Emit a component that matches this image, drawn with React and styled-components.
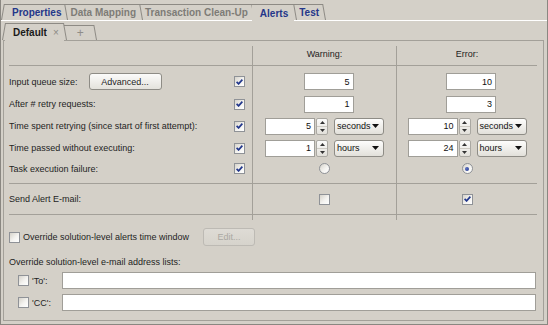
import React from 'react';
import styled, { createGlobalStyle, css } from 'styled-components';

const BG = '#d4d0c8';
const LINE = '#a3a099';
const EDGE = '#8d8a84';

const Global = createGlobalStyle`
  html, body { margin: 0; padding: 0; background: ${BG}; }
  body { font-family: "Liberation Sans", Arial, sans-serif; font-size: 9px; color: #1e1e1e; }
  * { box-sizing: border-box; }
`;

const Root = styled.div`
  width: 548px;
  height: 325px;
  background: ${BG};
  border: 1px solid #8a8781;
  border-top: none;
  display: flex;
  flex-direction: column;
`;

const TabStrip = styled.div`
  display: flex;
  align-items: flex-end;
  height: ${p => p.$h}px;
  padding-left: ${p => p.$pl}px;
  position: relative;
  z-index: 2;
  flex: none;
`;

const Tab = styled.div`
  position: relative;
  height: ${p => p.$h}px;
  margin-bottom: ${p => (p.$active ? -1 : 0)}px;
  display: flex;
  align-items: center;
  padding: 0 ${p => p.$pr}px 0 ${p => p.$pl}px;
  font-weight: bold;
  font-size: 10px;
  white-space: nowrap;
  color: ${p => p.$tone};
  background: ${p => (p.$active ? BG : 'transparent')};
  border-top: 1px solid ${EDGE};
  z-index: ${p => (p.$active ? 2 : 1)};
  &::after {
    content: '';
    position: absolute;
    top: -1px;
    bottom: ${p => (p.$active ? 1 : 0)}px;
    right: -3px;
    width: 1px;
    background: ${EDGE};
    transform: skewX(10deg);
    transform-origin: bottom;
  }
  ${p =>
    p.$first &&
    css`
      &::before {
        content: '';
        position: absolute;
        top: -1px;
        bottom: ${p.$active ? 1 : 0}px;
        left: -3px;
        width: 1px;
        background: ${EDGE};
        transform: skewX(-10deg);
        transform-origin: bottom;
      }
    `}
`;

const Close = styled.span`
  font-weight: normal;
  font-size: 10px;
  color: #8c8a85;
  margin-left: 6px;
`;

const Plus = styled.span`
  font-weight: normal;
  font-size: 12px;
  color: #8f8d88;
`;

const Frame = styled.div`
  flex: 1;
  border-top: 1px solid #ffffff;
  padding: 0 3px 3px 2px;
  display: flex;
  flex-direction: column;
`;

const Panel = styled.div`
  height: 281px;
  border: 1px solid ${LINE};
  padding: 5px 0 0 5px;
  display: flex;
  flex-direction: column;
  position: relative;
  z-index: 1;
`;

const Table = styled.div`
  display: grid;
  grid-template-columns: 243px 144px 141px;
  grid-template-rows: 20px 27px 22px 22px 22px 25px 31px 5px;
  width: 528px;
`;

const Row = styled.div`
  display: contents;
`;

const Cell = styled.div`
  display: flex;
  align-items: center;
  justify-content: ${p => (p.$col === 0 ? 'space-between' : 'center')};
  border-left: ${p => (p.$col > 0 ? `1px solid ${LINE}` : 'none')};
  border-bottom: ${p => (p.$line ? `1px solid ${LINE}` : 'none')};
  padding: ${p => p.$pt || 0}px ${p => (p.$col === 0 ? 7 : 0)}px ${p => p.$pb || 0}px 0;
`;

const LabelGroup = styled.div`
  display: flex;
  align-items: center;
  gap: 11px;
  white-space: nowrap;
`;

const Text = styled.span`
  white-space: nowrap;
  color: ${p => p.$color || '#1e1e1e'};
`;

const Button = styled.div`
  width: ${p => p.$w}px;
  height: ${p => p.$h}px;
  border: 1px solid ${p => (p.$disabled ? '#bdbab4' : '#8e8c86')};
  border-radius: 3px;
  background: ${p =>
    p.$disabled
      ? 'linear-gradient(#dedbd5, #d6d3cc)'
      : 'linear-gradient(#fbfbfa, #e4e2dc)'};
  display: flex;
  align-items: center;
  justify-content: center;
  font-size: 9px;
  color: ${p => (p.$disabled ? '#aaa8a2' : '#1e1e1e')};
  flex: none;
`;

const Box = styled.span`
  width: 11px;
  height: 11px;
  border: 1px solid #8f9297;
  border-radius: ${p => (p.$round ? '50%' : '0')};
  background: linear-gradient(135deg, #d6d3cb 0%, #f4f3f0 55%, #ffffff 100%);
  display: inline-flex;
  align-items: center;
  justify-content: center;
  flex: none;
`;

const Dot = styled.span`
  width: 4px;
  height: 4px;
  border-radius: 50%;
  background: radial-gradient(circle at 35% 35%, #5b70c0, #22378c);
`;

const NumBox = styled.div`
  width: ${p => p.$w}px;
  height: 17px;
  background: #fff;
  border: 1px solid #a09e98;
  display: flex;
  align-items: center;
  justify-content: flex-end;
  padding-right: 3px;
  font-size: 9px;
  color: #111;
  margin-left: ${p => p.$offset || 0}px;
  flex: none;
`;

const SpinGroup = styled.div`
  display: flex;
  align-items: center;
`;

const Spin = styled.div`
  width: 12px;
  height: 17px;
  margin-left: 1px;
  display: flex;
  flex-direction: column;
  border: 1px solid #aaa8a2;
  border-radius: 2px;
  background: linear-gradient(#fbfbfa, #e2e0da);
`;

const SpinHalf = styled.div`
  flex: 1;
  display: flex;
  align-items: center;
  justify-content: center;
  & + & {
    border-top: 1px solid #cdcac3;
  }
`;

const Select = styled.div`
  width: 50px;
  height: 17px;
  margin-left: 6px;
  border: 1px solid #8e8c86;
  border-radius: 3px;
  background: linear-gradient(#fdfdfc, #e2e0da);
  display: flex;
  align-items: center;
  justify-content: space-between;
  padding: 0 4px 0 2px;
  font-size: 9px;
  color: #111;
`;

const OverrideRow = styled.div`
  display: flex;
  align-items: center;
  height: 18px;
  margin-top: 8px;
`;

const CheckLabel = styled.span`
  margin-left: 3px;
  margin-right: 14px;
  white-space: nowrap;
`;

const EmailLabel = styled.div`
  margin-top: 9px;
  height: 14px;
  line-height: 14px;
`;

const AddressRow = styled.div`
  display: grid;
  grid-template-columns: 44px 1fr;
  align-items: center;
  width: 527px;
  height: 17px;
  padding-left: 9px;
  margin-top: ${p => p.$mt}px;
`;

const AddressLabel = styled.div`
  display: flex;
  align-items: center;
  gap: 3px;
`;

const AddressInput = styled.div`
  height: 17px;
  background: #fff;
  border: 1px solid #a09e98;
`;

const Check = ({ on }) => (
  <Box>
    {on && (
      <svg width="7" height="6" viewBox="0 0 7 6">
        <path d="M0.6 2.9 L2.6 4.9 L6.4 0.6" stroke="#22378c" strokeWidth="1.7" fill="none" />
      </svg>
    )}
  </Box>
);

const Radio = ({ on }) => <Box $round>{on && <Dot />}</Box>;

const Arrow = ({ up }) => (
  <svg width="5" height="3" viewBox="0 0 5 3">
    <path d={up ? 'M0 3 L2.5 0 L5 3 Z' : 'M0 0 L2.5 3 L5 0 Z'} fill="#333" />
  </svg>
);

const Spinner = ({ value, unit }) => (
  <SpinGroup>
    <NumBox $w={50}>{value}</NumBox>
    <Spin>
      <SpinHalf>
        <Arrow up />
      </SpinHalf>
      <SpinHalf>
        <Arrow />
      </SpinHalf>
    </Spin>
    <Select>
      <span>{unit}</span>
      <svg width="7" height="4" viewBox="0 0 7 4">
        <path d="M0 0 L7 0 L3.5 4 Z" fill="#111" />
      </svg>
    </Select>
  </SpinGroup>
);

const Value = ({ v }) => {
  if (!v) return null;
  if (v.type === 'text') return <NumBox $w={50} $offset={8}>{v.value}</NumBox>;
  if (v.type === 'spin') return <Spinner value={v.value} unit={v.unit} />;
  if (v.type === 'radio') return <Radio on={v.on} />;
  if (v.type === 'check') return <Check on={v.on} />;
  return null;
};

const rows = [
  { label: 'Input queue size:', advanced: true, enabled: true, pt: 4, warn: { type: 'text', value: '5' }, err: { type: 'text', value: '10' } },
  { label: 'After # retry requests:', enabled: true, warn: { type: 'text', value: '1' }, err: { type: 'text', value: '3' } },
  { label: 'Time spent retrying (since start of first attempt):', enabled: true, warn: { type: 'spin', value: '5', unit: 'seconds' }, err: { type: 'spin', value: '10', unit: 'seconds' } },
  { label: 'Time passed without executing:', enabled: true, warn: { type: 'spin', value: '1', unit: 'hours' }, err: { type: 'spin', value: '24', unit: 'hours' } },
  { label: 'Task execution failure:', enabled: true, pb: 5, line: true, warn: { type: 'radio', on: false }, err: { type: 'radio', on: true } },
  { label: 'Send Alert E-mail:', enabled: false, line: true, warn: { type: 'check', on: false }, err: { type: 'check', on: true } },
];

const topTabs = [
  { label: 'Properties', tone: '#24378a', first: true, pl: 8, pr: 4 },
  { label: 'Data Mapping', tone: '#7e7c77', pl: 5, pr: 4 },
  { label: 'Transaction Clean-Up', tone: '#7e7c77', pl: 5, pr: 4 },
  { label: 'Alerts', tone: '#24378a', active: true, pl: 8, pr: 6 },
  { label: 'Test', tone: '#24378a', pl: 5, pr: 4 },
];

export default function App() {
  return (
    <>
      <Global />
      <Root>
        <TabStrip $h={20} $pl={3}>
          {topTabs.map(t => (
            <Tab
              key={t.label}
              $h={t.active ? 17 : 16}
              $active={t.active}
              $first={t.first}
              $tone={t.tone}
              $pl={t.pl}
              $pr={t.pr}
            >
              {t.label}
            </Tab>
          ))}
        </TabStrip>
        <Frame>
          <TabStrip $h={19} $pl={2}>
            <Tab $h={18} $active $first $tone="#1a1a1a" $pl={8} $pr={5}>
              Default
              <Close>×</Close>
            </Tab>
            <Tab $h={15} $tone="#8f8d88" $pl={13} $pr={10}>
              <Plus>+</Plus>
            </Tab>
          </TabStrip>
          <Panel>
            <Table>
              <Row>
                <Cell $col={0} $line $pb={4} />
                <Cell $col={1} $line $pb={4}>
                  <Text>Warning:</Text>
                </Cell>
                <Cell $col={2} $line $pb={4}>
                  <Text>Error:</Text>
                </Cell>
              </Row>
              {rows.map(r => (
                <Row key={r.label}>
                  <Cell $col={0} $line={r.line} $pt={r.pt} $pb={r.pb}>
                    <LabelGroup>
                      <Text>{r.label}</Text>
                      {r.advanced && (
                        <Button $w={73} $h={17}>
                          Advanced...
                        </Button>
                      )}
                    </LabelGroup>
                    {r.enabled && <Check on />}
                  </Cell>
                  <Cell $col={1} $line={r.line} $pt={r.pt} $pb={r.pb}>
                    <Value v={r.warn} />
                  </Cell>
                  <Cell $col={2} $line={r.line} $pt={r.pt} $pb={r.pb}>
                    <Value v={r.err} />
                  </Cell>
                </Row>
              ))}
              <Row>
                <Cell $col={0} />
                <Cell $col={1} />
                <Cell $col={2} />
              </Row>
            </Table>
            <OverrideRow>
              <Check />
              <CheckLabel>Override solution-level alerts time window</CheckLabel>
              <Button $w={52} $h={18} $disabled>
                Edit...
              </Button>
            </OverrideRow>
            <EmailLabel>Override solution-level e-mail address lists:</EmailLabel>
            <AddressRow $mt={3}>
              <AddressLabel>
                <Check />
                <Text>'To':</Text>
              </AddressLabel>
              <AddressInput />
            </AddressRow>
            <AddressRow $mt={5}>
              <AddressLabel>
                <Check />
                <Text>'CC':</Text>
              </AddressLabel>
              <AddressInput />
            </AddressRow>
          </Panel>
        </Frame>
      </Root>
    </>
  );
}
